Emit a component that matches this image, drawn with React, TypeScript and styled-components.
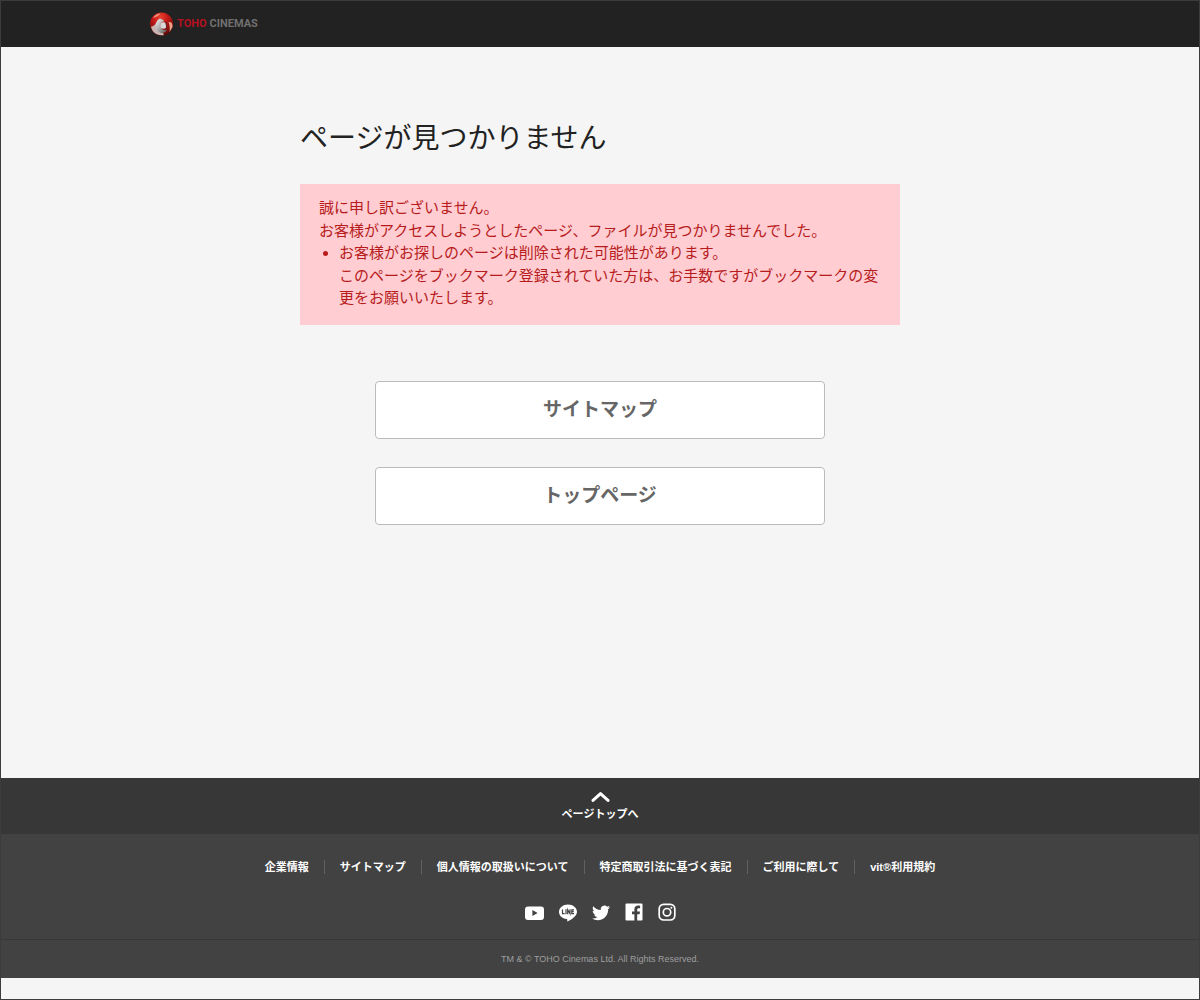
import React from "react";
import styled, { createGlobalStyle } from "styled-components";

const GlobalStyle = createGlobalStyle`
  *, *::before, *::after { box-sizing: border-box; }
  body {
    margin: 0;
    background: #f5f5f5;
    color: #222;
    font-family: "Liberation Sans", "Noto Sans CJK JP", sans-serif;
    font-size: 15px;
    line-height: 1.5;
  }
  a { color: inherit; text-decoration: none; }
  ul { margin: 0; padding: 0; }
`;

const Page = styled.div`
  min-height: 100vh;
  border: 1px solid #3c3c3c;
`;

const Header = styled.header`
  background: #222;
`;

const HeaderInner = styled.div`
  display: flex;
  align-items: center;
  max-width: 900px;
  height: 46px;
  margin: 0 auto;
`;

const Logo = styled.a`
  display: flex;
  align-items: center;
  gap: 3px;
`;

const LogoWord = styled.span<{ $color: string }>`
  color: ${(p) => p.$color};
  font-family: Roboto, sans-serif;
  font-size: 11px;
  font-weight: 700;
  line-height: 16px;
`;

const Main = styled.main`
  max-width: 600px;
  margin: 0 auto;
  padding: 71px 0 253px;
`;

const Title = styled.h1`
  margin: 0 0 24px;
  font-size: 28px;
  font-weight: 400;
  line-height: 42px;
`;

const Alert = styled.div`
  padding: 13px 19px 15px;
  background: #ffcdd2;
  color: #b71c1c;

  p { margin: 0; }
  ul { padding-left: 20px; }
`;

const Actions = styled.div`
  display: flex;
  flex-direction: column;
  gap: 28px;
  max-width: 450px;
  margin: 56px auto 0;
`;

const ActionLink = styled.a`
  padding: 14px 16px;
  border: 1px solid #bbb;
  border-radius: 4px;
  background: #fff;
  color: #666;
  font-size: 19px;
  font-weight: 700;
  line-height: 28px;
  text-align: center;
`;

const Footer = styled.footer`
  background: #424242;
  color: #fff;
`;

const PageTop = styled.a`
  display: flex;
  flex-direction: column;
  align-items: center;
  gap: 4px;
  height: 56px;
  padding-top: 14px;
  background: #373737;
  font-size: 11px;
  font-weight: 700;
  line-height: 16px;
`;

const FooterNav = styled.ul`
  display: flex;
  flex-wrap: wrap;
  justify-content: center;
  padding-top: 25px;
  list-style: none;
  font-size: 11px;
  font-weight: 700;
  line-height: 16px;
`;

const FooterNavItem = styled.li`
  display: flex;
  align-items: center;

  & + &::before {
    content: "";
    width: 1px;
    height: 14px;
    margin: 0 15px;
    background: #616161;
  }
`;

const Social = styled.ul`
  display: flex;
  justify-content: center;
  gap: 15px;
  padding: 28px 0 17px;
  list-style: none;

  a, svg { display: block; }
`;

const Copyright = styled.p`
  margin: 0;
  padding: 12px 0 11px;
  border-top: 1px solid #373737;
  color: #9e9e9e;
  font-size: 9px;
  line-height: 15px;
  text-align: center;
`;

const LogoMark = () => (
  <svg width="24" height="24" viewBox="0 0 24 24" aria-hidden="true">
    <defs>
      <radialGradient id="ball" cx="45%" cy="20%" r="80%">
        <stop offset="0" stopColor="#e8422f" />
        <stop offset="0.4" stopColor="#c41a18" />
        <stop offset="1" stopColor="#5e0808" />
      </radialGradient>
      <linearGradient id="steel" x1="0" y1="0" x2="1" y2="1">
        <stop offset="0" stopColor="#f2f2f2" />
        <stop offset="0.5" stopColor="#aaa" />
        <stop offset="1" stopColor="#555" />
      </linearGradient>
    </defs>
    <circle cx="11.500" cy="12" r="11.500" fill="url(#ball)" />
    <path d="M3 6C5 2.600 8 1.500 10.500 1.500C9 3.500 6 5 3 6Z" fill="#f0937c" />
    <path d="M1 14.500C3.500 14.500 4.500 13 6 11C5.500 16 8 20 13 21L14 23C7 24.500 2 20 1 14.500Z" fill="#c8b4b0" />
    <path d="M9 7C4.500 10 4.500 17 9 20C12.500 22 16 20.500 17 17.500C14 19 11 17.500 10.500 14C10 11 12 9.500 14.500 9.500C13 7.500 11 6.500 9 7Z" fill="url(#steel)" />
    <circle cx="13.500" cy="13.500" r="3.200" fill="#d8d8d8" />
    <path d="M14 9L17 10.500V16.500L15 19C16.500 15.500 16.500 12 14 9Z" fill="#6a2020" />
    <path d="M18.500 10C21 9.500 22.800 11 22.500 15L19.500 20C20 16 19.800 13 18.500 10Z" fill="#f0a58a" />
  </svg>
);

const ChevronUp = () => (
  <svg width="20" height="10" viewBox="0 0 20 10" fill="none" stroke="#fff" strokeWidth="3" strokeLinecap="round" strokeLinejoin="round" aria-hidden="true">
    <path d="M3 8.400L10.500 1.600L18 8.400" />
  </svg>
);

const YouTubeIcon = () => (
  <svg width="19" height="19" viewBox="0 0 19 19" aria-hidden="true">
    <rect y="3.500" width="19" height="13.500" rx="3" fill="#fff" />
    <path d="M7.400 7V13L12.600 10Z" fill="#424242" />
  </svg>
);

const LineIcon = () => (
  <svg width="18" height="19" viewBox="0 0 18 19" aria-hidden="true">
    <path d="M9 1.500C4 1.500 0 4.800 0 8.900C0 12.500 3.200 15.500 7.600 16.100C8.500 16.300 8.400 16.800 8.200 18.500C9.500 18.100 18 13.600 18 8.900C18 4.800 14 1.500 9 1.500Z" fill="#fff" />
    <path d="M3.500 6.500V10.700H5.700M7 6.300V11.200M8.700 11.200V6.700L11 10.800V6.300M15 6.800H12.800V10.700H15M12.800 8.700H14.700" fill="none" stroke="#424242" strokeWidth="1.200" />
  </svg>
);

const TwitterIcon = () => (
  <svg width="18" height="19" viewBox="0 0 24 25" fill="#fff" aria-hidden="true">
    <path transform="translate(0 1)" d="M23.953 4.570a10 10 0 0 1-2.825.775 4.958 4.958 0 0 0 2.163-2.723c-.951.555-2.005.959-3.127 1.184a4.920 4.920 0 0 0-8.384 4.482C7.690 8.095 4.067 6.130 1.640 3.162a4.822 4.822 0 0 0-.666 2.475c0 1.710.870 3.213 2.188 4.096a4.904 4.904 0 0 1-2.228-.616v.060a4.923 4.923 0 0 0 3.946 4.827 4.996 4.996 0 0 1-2.212.085 4.936 4.936 0 0 0 4.604 3.417 9.867 9.867 0 0 1-6.102 2.105c-.390 0-.779-.023-1.170-.067a13.995 13.995 0 0 0 7.557 2.209c9.053 0 13.998-7.496 13.998-13.985 0-.210 0-.420-.015-.630A9.935 9.935 0 0 0 24 4.590z" />
  </svg>
);

const FacebookIcon = () => (
  <svg width="18" height="19" viewBox="0 0 18 19" aria-hidden="true">
    <path d="M1.500 .5H16.500Q17.500 .5 17.500 1.500V16.500Q17.500 17.500 16.500 17.500H12.200V11.200H14.600L15 8.400H12.200V6.700C12.200 5.700 12.600 5.200 13.700 5.200H15.100V2.800C14.600 2.700 13.900 2.600 13.100 2.600C10.900 2.600 9.400 3.900 9.400 6.300V8.400H7V11.200H9.400V17.500H1.500Q.5 17.500 .5 16.500V1.500Q.5 .5 1.500 .5Z" fill="#fff" />
  </svg>
);

const InstagramIcon = () => (
  <svg width="18" height="19" viewBox="0 0 18 19" fill="none" stroke="#fff" strokeWidth="1.700" aria-hidden="true">
    <rect x="1.200" y="1.400" width="15.600" height="15.600" rx="4.400" />
    <circle cx="9" cy="9.200" r="3.700" />
    <circle cx="13.400" cy="4.800" r="1" fill="#fff" stroke="none" />
  </svg>
);

const navItems = [
  "企業情報",
  "サイトマップ",
  "個人情報の取扱いについて",
  "特定商取引法に基づく表記",
  "ご利用に際して",
  "vit®利用規約",
];

const socialItems = [
  { name: "YouTube", Icon: YouTubeIcon },
  { name: "LINE", Icon: LineIcon },
  { name: "Twitter", Icon: TwitterIcon },
  { name: "Facebook", Icon: FacebookIcon },
  { name: "Instagram", Icon: InstagramIcon },
];

export default function App() {
  return (
    <Page lang="ja" id="top">
      <GlobalStyle />
      <Header>
        <HeaderInner>
          <Logo href="#">
            <LogoMark />
            <LogoWord $color="#b5101f">TOHO</LogoWord>
            <LogoWord $color="#707070">CINEMAS</LogoWord>
          </Logo>
        </HeaderInner>
      </Header>
      <Main>
        <Title>ページが見つかりません</Title>
        <Alert role="alert">
          <p>
            誠に申し訳ございません。
            <br />
            お客様がアクセスしようとしたページ、ファイルが見つかりませんでした。
          </p>
          <ul>
            <li>
              お客様がお探しのページは削除された可能性があります。
              <br />
              このページをブックマーク登録されていた方は、お手数ですがブックマークの変更をお願いいたします。
            </li>
          </ul>
        </Alert>
        <Actions>
          <ActionLink href="#">サイトマップ</ActionLink>
          <ActionLink href="#">トップページ</ActionLink>
        </Actions>
      </Main>
      <Footer>
        <PageTop href="#top">
          <ChevronUp />
          ページトップへ
        </PageTop>
        <FooterNav>
          {navItems.map((label) => (
            <FooterNavItem key={label}>
              <a href="#">{label}</a>
            </FooterNavItem>
          ))}
        </FooterNav>
        <Social>
          {socialItems.map(({ name, Icon }) => (
            <li key={name}>
              <a href="#" aria-label={name}>
                <Icon />
              </a>
            </li>
          ))}
        </Social>
        <Copyright>TM &amp; © TOHO Cinemas Ltd. All Rights Reserved.</Copyright>
      </Footer>
    </Page>
  );
}
